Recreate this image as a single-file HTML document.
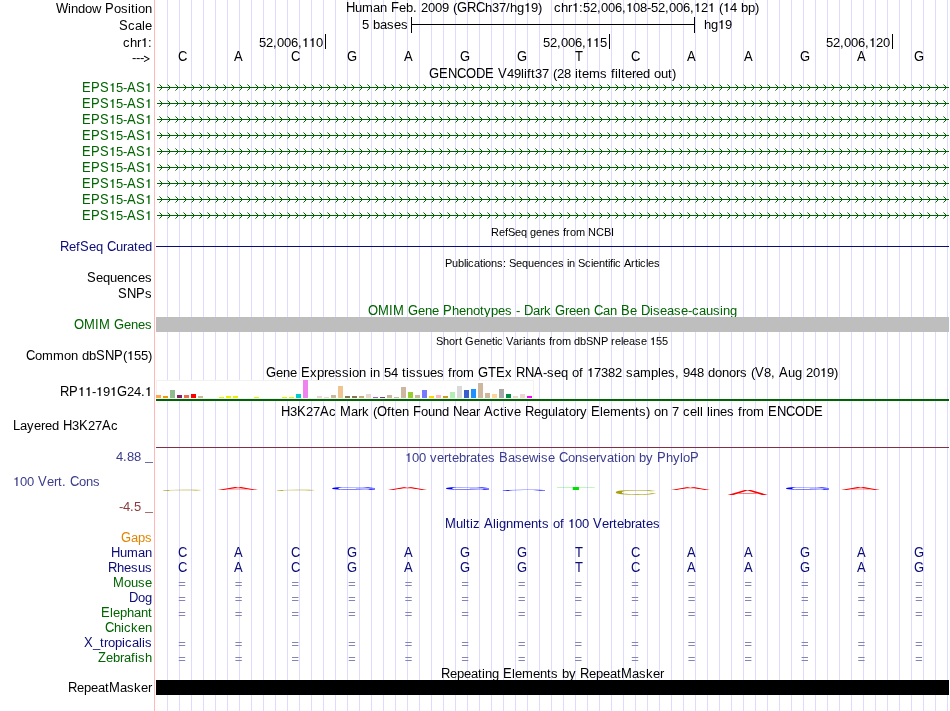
<!DOCTYPE html><html><head><meta charset="utf-8"><style>html,body{margin:0;padding:0;background:#fff;width:950px;height:711px;overflow:hidden}svg{display:block;will-change:transform}text{font-family:"Liberation Sans",sans-serif;font-size:13px}.s text{font-size:11px}</style></head><body>
<svg width="950" height="711" viewBox="0 0 950 711">
<rect width="950" height="711" fill="#fff"/>
<path d="M167 0h1v711h-1zM179 0h1v711h-1zM191 0h1v711h-1zM203 0h1v711h-1zM215 0h1v711h-1zM227 0h1v711h-1zM239 0h1v711h-1zM251 0h1v711h-1zM263 0h1v711h-1zM275 0h1v711h-1zM287 0h1v711h-1zM299 0h1v711h-1zM311 0h1v711h-1zM323 0h1v711h-1zM335 0h1v711h-1zM347 0h1v711h-1zM359 0h1v711h-1zM371 0h1v711h-1zM383 0h1v711h-1zM395 0h1v711h-1zM407 0h1v711h-1zM419 0h1v711h-1zM431 0h1v711h-1zM443 0h1v711h-1zM455 0h1v711h-1zM467 0h1v711h-1zM479 0h1v711h-1zM491 0h1v711h-1zM503 0h1v711h-1zM515 0h1v711h-1zM527 0h1v711h-1zM539 0h1v711h-1zM551 0h1v711h-1zM563 0h1v711h-1zM575 0h1v711h-1zM587 0h1v711h-1zM599 0h1v711h-1zM611 0h1v711h-1zM623 0h1v711h-1zM635 0h1v711h-1zM647 0h1v711h-1zM659 0h1v711h-1zM671 0h1v711h-1zM683 0h1v711h-1zM695 0h1v711h-1zM707 0h1v711h-1zM719 0h1v711h-1zM731 0h1v711h-1zM743 0h1v711h-1zM755 0h1v711h-1zM767 0h1v711h-1zM779 0h1v711h-1zM791 0h1v711h-1zM803 0h1v711h-1zM815 0h1v711h-1zM827 0h1v711h-1zM839 0h1v711h-1zM851 0h1v711h-1zM863 0h1v711h-1zM875 0h1v711h-1zM887 0h1v711h-1zM899 0h1v711h-1zM911 0h1v711h-1zM923 0h1v711h-1zM935 0h1v711h-1zM947 0h1v711h-1z" fill="#dcdcff" shape-rendering="crispEdges"/>
<rect x="154" y="0" width="1" height="711" fill="#ffb8b8" shape-rendering="crispEdges"/>
<g><text transform="translate(0 13) scale(1 1.118)" x="56 105" y="0">WP</text><text transform="translate(0 13) scale(1 1.05)" x="68 78 128 131 135" y="0">iditi</text><text transform="translate(0 13) scale(1 1.02)" x="71 85 92 114 121 138 145" y="0">nowoson</text></g>
<g><text transform="translate(0 30) scale(1 1.118)" x="119" y="0">S</text><text transform="translate(0 30) scale(1 1.02)" x="128 135 145" y="0">cae</text><text transform="translate(0 30) scale(1 1.05)" x="142" y="0">l</text></g>
<g><text transform="translate(0 47) scale(1 1.02)" x="123 137 148" y="0">cr:</text><text transform="translate(0 47) scale(1 1.05)" x="130" y="0">h</text><path transform="translate(141 47)" d="M3.25 0.00L4.55 0.00L4.55 -9.10L3.60 -9.10C3.40 -8.00 2.70 -7.45 1.35 -7.35L1.35 -6.45L3.25 -6.45Z"/></g>
<g><text transform="translate(0 62) scale(1 1.02)" x="132 136 140" y="0">---</text></g>
<path d="M144.4 56.3L149.2 58.85L144.4 61.4" fill="none" stroke="#000" stroke-width="1.05" stroke-linejoin="round" stroke-linecap="round"/>
<g><text transform="translate(0 12) scale(1 1.118)" x="346 391 457 467 476" y="0">HFGRC</text><text transform="translate(0 12) scale(1 1.02)" x="355 362 373 380 399 413 453 506 517 538" y="0">umane.(/g)</text><text transform="translate(0 12) scale(1 1.05)" x="406 485 510" y="0">bhh</text><text transform="translate(0 12)" x="421 428 435 442 492 499 531" y="0">2009379</text><path transform="translate(524 12)" d="M3.25 0.00L4.55 0.00L4.55 -9.10L3.60 -9.10C3.40 -8.00 2.70 -7.45 1.35 -7.35L1.35 -6.45L3.25 -6.45Z"/></g>
<g><text transform="translate(0 12) scale(1 1.02)" x="554 568 579 597 622 647 665 690 719 748 755" y="0">cr:,,-,,(p)</text><text transform="translate(0 12) scale(1 1.05)" x="561 741" y="0">hb</text><text transform="translate(0 12)" x="583 590 601 608 615 633 640 651 658 669 676 683 701 730" y="0">52006085200624</text><path transform="translate(572 12)" d="M3.25 0.00L4.55 0.00L4.55 -9.10L3.60 -9.10C3.40 -8.00 2.70 -7.45 1.35 -7.35L1.35 -6.45L3.25 -6.45Z"/><path transform="translate(626 12)" d="M3.25 0.00L4.55 0.00L4.55 -9.10L3.60 -9.10C3.40 -8.00 2.70 -7.45 1.35 -7.35L1.35 -6.45L3.25 -6.45Z"/><path transform="translate(694 12)" d="M3.25 0.00L4.55 0.00L4.55 -9.10L3.60 -9.10C3.40 -8.00 2.70 -7.45 1.35 -7.35L1.35 -6.45L3.25 -6.45Z"/><path transform="translate(708 12)" d="M3.25 0.00L4.55 0.00L4.55 -9.10L3.60 -9.10C3.40 -8.00 2.70 -7.45 1.35 -7.35L1.35 -6.45L3.25 -6.45Z"/><path transform="translate(723 12)" d="M3.25 0.00L4.55 0.00L4.55 -9.10L3.60 -9.10C3.40 -8.00 2.70 -7.45 1.35 -7.35L1.35 -6.45L3.25 -6.45Z"/></g>
<g><text transform="translate(0 29)" x="362" y="0">5</text><text transform="translate(0 29) scale(1 1.05)" x="373" y="0">b</text><text transform="translate(0 29) scale(1 1.02)" x="380 387 394 401" y="0">ases</text></g>
<g><text transform="translate(0 29) scale(1 1.05)" x="704" y="0">h</text><text transform="translate(0 29) scale(1 1.02)" x="711" y="0">g</text><text transform="translate(0 29)" x="725" y="0">9</text><path transform="translate(718 29)" d="M3.25 0.00L4.55 0.00L4.55 -9.10L3.60 -9.10C3.40 -8.00 2.70 -7.45 1.35 -7.35L1.35 -6.45L3.25 -6.45Z"/></g>
<g fill="#000" shape-rendering="crispEdges">
<rect x="411" y="17" width="1" height="16"/><rect x="694" y="17" width="1" height="16"/><rect x="411" y="24" width="284" height="1"/>
<rect x="325" y="34" width="1" height="15"/><rect x="609" y="34" width="1" height="15"/><rect x="892" y="34" width="1" height="15"/>
</g>
<g><text transform="translate(0 47)" x="259 266 277 284 291 316" y="0">520060</text><text transform="translate(0 47) scale(1 1.02)" x="273 298" y="0">,,</text><path transform="translate(302 47)" d="M3.25 0.00L4.55 0.00L4.55 -9.10L3.60 -9.10C3.40 -8.00 2.70 -7.45 1.35 -7.35L1.35 -6.45L3.25 -6.45Z"/><path transform="translate(309 47)" d="M3.25 0.00L4.55 0.00L4.55 -9.10L3.60 -9.10C3.40 -8.00 2.70 -7.45 1.35 -7.35L1.35 -6.45L3.25 -6.45Z"/></g>
<g><text transform="translate(0 47)" x="543 550 561 568 575 600" y="0">520065</text><text transform="translate(0 47) scale(1 1.02)" x="557 582" y="0">,,</text><path transform="translate(586 47)" d="M3.25 0.00L4.55 0.00L4.55 -9.10L3.60 -9.10C3.40 -8.00 2.70 -7.45 1.35 -7.35L1.35 -6.45L3.25 -6.45Z"/><path transform="translate(593 47)" d="M3.25 0.00L4.55 0.00L4.55 -9.10L3.60 -9.10C3.40 -8.00 2.70 -7.45 1.35 -7.35L1.35 -6.45L3.25 -6.45Z"/></g>
<g><text transform="translate(0 47)" x="826 833 844 851 858 876 883" y="0">5200620</text><text transform="translate(0 47) scale(1 1.02)" x="840 865" y="0">,,</text><path transform="translate(869 47)" d="M3.25 0.00L4.55 0.00L4.55 -9.10L3.60 -9.10C3.40 -8.00 2.70 -7.45 1.35 -7.35L1.35 -6.45L3.25 -6.45Z"/></g>
<g><text transform="translate(0 61) scale(1 1.118)" x="178" y="0">C</text></g>
<g><text transform="translate(0 61) scale(1 1.118)" x="234" y="0">A</text></g>
<g><text transform="translate(0 61) scale(1 1.118)" x="291" y="0">C</text></g>
<g><text transform="translate(0 61) scale(1 1.118)" x="347" y="0">G</text></g>
<g><text transform="translate(0 61) scale(1 1.118)" x="404" y="0">A</text></g>
<g><text transform="translate(0 61) scale(1 1.118)" x="460" y="0">G</text></g>
<g><text transform="translate(0 61) scale(1 1.118)" x="517" y="0">G</text></g>
<g><text transform="translate(0 61) scale(1 1.118)" x="575" y="0">T</text></g>
<g><text transform="translate(0 61) scale(1 1.118)" x="631" y="0">C</text></g>
<g><text transform="translate(0 61) scale(1 1.118)" x="687" y="0">A</text></g>
<g><text transform="translate(0 61) scale(1 1.118)" x="744" y="0">A</text></g>
<g><text transform="translate(0 61) scale(1 1.118)" x="800" y="0">G</text></g>
<g><text transform="translate(0 61) scale(1 1.118)" x="857" y="0">A</text></g>
<g><text transform="translate(0 61) scale(1 1.118)" x="914" y="0">G</text></g>
<g><text transform="translate(0 78) scale(1 1.118)" x="429 439 448 457 466 476 485 498" y="0">GENCODEV</text><text transform="translate(0 78)" x="507 514 535 542 557 564" y="0">493728</text><text transform="translate(0 78) scale(1 1.05)" x="521 524 527 531 575 578 611 615 618 621 643 668" y="0">liftitfiltdt</text><text transform="translate(0 78) scale(1 1.02)" x="553 582 589 600 625 632 636 654 661 672" y="0">(emsereou)</text></g>
<g fill="#006400"><text transform="translate(0 92) scale(1 1.118)" x="82 91 100 127 136" y="0">EPSAS</text><text transform="translate(0 92)" x="116" y="0">5</text><text transform="translate(0 92) scale(1 1.02)" x="123" y="0">-</text><path transform="translate(109 92)" d="M3.25 0.00L4.55 0.00L4.55 -9.10L3.60 -9.10C3.40 -8.00 2.70 -7.45 1.35 -7.35L1.35 -6.45L3.25 -6.45Z"/><path transform="translate(145 92)" d="M3.25 0.00L4.55 0.00L4.55 -9.10L3.60 -9.10C3.40 -8.00 2.70 -7.45 1.35 -7.35L1.35 -6.45L3.25 -6.45Z"/></g>
<g fill="#006400"><text transform="translate(0 108) scale(1 1.118)" x="82 91 100 127 136" y="0">EPSAS</text><text transform="translate(0 108)" x="116" y="0">5</text><text transform="translate(0 108) scale(1 1.02)" x="123" y="0">-</text><path transform="translate(109 108)" d="M3.25 0.00L4.55 0.00L4.55 -9.10L3.60 -9.10C3.40 -8.00 2.70 -7.45 1.35 -7.35L1.35 -6.45L3.25 -6.45Z"/><path transform="translate(145 108)" d="M3.25 0.00L4.55 0.00L4.55 -9.10L3.60 -9.10C3.40 -8.00 2.70 -7.45 1.35 -7.35L1.35 -6.45L3.25 -6.45Z"/></g>
<g fill="#006400"><text transform="translate(0 124) scale(1 1.118)" x="82 91 100 127 136" y="0">EPSAS</text><text transform="translate(0 124)" x="116" y="0">5</text><text transform="translate(0 124) scale(1 1.02)" x="123" y="0">-</text><path transform="translate(109 124)" d="M3.25 0.00L4.55 0.00L4.55 -9.10L3.60 -9.10C3.40 -8.00 2.70 -7.45 1.35 -7.35L1.35 -6.45L3.25 -6.45Z"/><path transform="translate(145 124)" d="M3.25 0.00L4.55 0.00L4.55 -9.10L3.60 -9.10C3.40 -8.00 2.70 -7.45 1.35 -7.35L1.35 -6.45L3.25 -6.45Z"/></g>
<g fill="#006400"><text transform="translate(0 140) scale(1 1.118)" x="82 91 100 127 136" y="0">EPSAS</text><text transform="translate(0 140)" x="116" y="0">5</text><text transform="translate(0 140) scale(1 1.02)" x="123" y="0">-</text><path transform="translate(109 140)" d="M3.25 0.00L4.55 0.00L4.55 -9.10L3.60 -9.10C3.40 -8.00 2.70 -7.45 1.35 -7.35L1.35 -6.45L3.25 -6.45Z"/><path transform="translate(145 140)" d="M3.25 0.00L4.55 0.00L4.55 -9.10L3.60 -9.10C3.40 -8.00 2.70 -7.45 1.35 -7.35L1.35 -6.45L3.25 -6.45Z"/></g>
<g fill="#006400"><text transform="translate(0 156) scale(1 1.118)" x="82 91 100 127 136" y="0">EPSAS</text><text transform="translate(0 156)" x="116" y="0">5</text><text transform="translate(0 156) scale(1 1.02)" x="123" y="0">-</text><path transform="translate(109 156)" d="M3.25 0.00L4.55 0.00L4.55 -9.10L3.60 -9.10C3.40 -8.00 2.70 -7.45 1.35 -7.35L1.35 -6.45L3.25 -6.45Z"/><path transform="translate(145 156)" d="M3.25 0.00L4.55 0.00L4.55 -9.10L3.60 -9.10C3.40 -8.00 2.70 -7.45 1.35 -7.35L1.35 -6.45L3.25 -6.45Z"/></g>
<g fill="#006400"><text transform="translate(0 172) scale(1 1.118)" x="82 91 100 127 136" y="0">EPSAS</text><text transform="translate(0 172)" x="116" y="0">5</text><text transform="translate(0 172) scale(1 1.02)" x="123" y="0">-</text><path transform="translate(109 172)" d="M3.25 0.00L4.55 0.00L4.55 -9.10L3.60 -9.10C3.40 -8.00 2.70 -7.45 1.35 -7.35L1.35 -6.45L3.25 -6.45Z"/><path transform="translate(145 172)" d="M3.25 0.00L4.55 0.00L4.55 -9.10L3.60 -9.10C3.40 -8.00 2.70 -7.45 1.35 -7.35L1.35 -6.45L3.25 -6.45Z"/></g>
<g fill="#006400"><text transform="translate(0 188) scale(1 1.118)" x="82 91 100 127 136" y="0">EPSAS</text><text transform="translate(0 188)" x="116" y="0">5</text><text transform="translate(0 188) scale(1 1.02)" x="123" y="0">-</text><path transform="translate(109 188)" d="M3.25 0.00L4.55 0.00L4.55 -9.10L3.60 -9.10C3.40 -8.00 2.70 -7.45 1.35 -7.35L1.35 -6.45L3.25 -6.45Z"/><path transform="translate(145 188)" d="M3.25 0.00L4.55 0.00L4.55 -9.10L3.60 -9.10C3.40 -8.00 2.70 -7.45 1.35 -7.35L1.35 -6.45L3.25 -6.45Z"/></g>
<g fill="#006400"><text transform="translate(0 204) scale(1 1.118)" x="82 91 100 127 136" y="0">EPSAS</text><text transform="translate(0 204)" x="116" y="0">5</text><text transform="translate(0 204) scale(1 1.02)" x="123" y="0">-</text><path transform="translate(109 204)" d="M3.25 0.00L4.55 0.00L4.55 -9.10L3.60 -9.10C3.40 -8.00 2.70 -7.45 1.35 -7.35L1.35 -6.45L3.25 -6.45Z"/><path transform="translate(145 204)" d="M3.25 0.00L4.55 0.00L4.55 -9.10L3.60 -9.10C3.40 -8.00 2.70 -7.45 1.35 -7.35L1.35 -6.45L3.25 -6.45Z"/></g>
<g fill="#006400"><text transform="translate(0 220) scale(1 1.118)" x="82 91 100 127 136" y="0">EPSAS</text><text transform="translate(0 220)" x="116" y="0">5</text><text transform="translate(0 220) scale(1 1.02)" x="123" y="0">-</text><path transform="translate(109 220)" d="M3.25 0.00L4.55 0.00L4.55 -9.10L3.60 -9.10C3.40 -8.00 2.70 -7.45 1.35 -7.35L1.35 -6.45L3.25 -6.45Z"/><path transform="translate(145 220)" d="M3.25 0.00L4.55 0.00L4.55 -9.10L3.60 -9.10C3.40 -8.00 2.70 -7.45 1.35 -7.35L1.35 -6.45L3.25 -6.45Z"/></g>
<defs><pattern id="chev" patternUnits="userSpaceOnUse" x="159" y="84" width="8" height="16"><g shape-rendering="crispEdges"><rect x="0" y="3" width="8" height="1" fill="#006400"/><rect x="2" y="2" width="1" height="3" fill="#006400"/><rect x="1" y="1" width="1" height="1" fill="#006400"/><rect x="1" y="5" width="1" height="1" fill="#006400"/><rect x="0" y="0" width="1" height="1" fill="#6aa86a"/><rect x="0" y="6" width="1" height="1" fill="#6aa86a"/></g></pattern></defs>
<rect x="157" y="84" width="792" height="144" fill="url(#chev)"/>
<g class="s"><text transform="translate(0 236) scale(1 1.03)" x="491 499 505 508 515 521 530 536 542 548 554 563 566 570 576 588 596 604 611" y="0">RefSeqgenesfromNCBI</text></g>
<g fill="#0c0c78"><text transform="translate(0 251) scale(1 1.118)" x="60 80 107" y="0">RSC</text><text transform="translate(0 251) scale(1 1.02)" x="69 89 96 116 123 127 138" y="0">eequrae</text><text transform="translate(0 251) scale(1 1.05)" x="76 134 145" y="0">ftd</text></g>
<rect x="156" y="246" width="793" height="1" fill="#0c0c78" shape-rendering="crispEdges"/>
<g class="s"><text transform="translate(0 267) scale(1 1.03)" x="445 452 458 464 466 468 474 480 483 485 491 497 503 509 516 522 528 534 540 546 552 558 567 569 578 585 591 593 599 605 608 610 613 615 624 631 635 638 640 646 648 654" y="0">Publications:SequencesinScientificArticles</text></g>
<g><text transform="translate(0 282) scale(1 1.118)" x="87" y="0">S</text><text transform="translate(0 282) scale(1 1.02)" x="96 103 110 117 124 131 138 145" y="0">equences</text></g>
<g><text transform="translate(0 298) scale(1 1.118)" x="118 127 136" y="0">SNP</text><text transform="translate(0 298) scale(1 1.02)" x="145" y="0">s</text></g>
<g fill="#006400"><text transform="translate(0 315) scale(1 1.118)" x="368 378 389 393 408 443 524 555 594 621 641" y="0">OMIMGPDGCBD</text><text transform="translate(0 315) scale(1 1.02)" x="418 425 432 459 466 473 484 491 498 505 516 533 540 565 569 576 583 603 610 630 653 660 667 674 681 688 692 699 706 713 723 730" y="0">eneenoypes-arreenanesease-causng</text><text transform="translate(0 315) scale(1 1.05)" x="452 480 544 650 720" y="0">htkii</text></g>
<g fill="#006400"><text transform="translate(0 329) scale(1 1.118)" x="74 84 95 99 114" y="0">OMIMG</text><text transform="translate(0 329) scale(1 1.02)" x="124 131 138 145" y="0">enes</text></g>
<rect x="156" y="317" width="793" height="15" fill="#bebebe" shape-rendering="crispEdges"/>
<g class="s"><text transform="translate(0 345) scale(1 1.03)" x="436 443 449 455 459 465 474 480 486 492 495 497 506 513 519 523 525 531 537 540 549 552 556 562 574 580 586 593 601 611 615 621 623 629 635 641" y="0">ShortGeneticVariantsfromdbSNPrelease</text><text transform="translate(0 345) scale(1 1.03)" x="656 662" y="0">55</text><path transform="translate(650 345)" d="M2.75 0.00L3.85 0.00L3.85 -7.70L3.05 -7.70C2.88 -6.77 2.28 -6.30 1.14 -6.22L1.14 -5.46L2.75 -5.46Z"/></g>
<g><text transform="translate(0 360) scale(1 1.118)" x="26 96 105 114" y="0">CSNP</text><text transform="translate(0 360) scale(1 1.02)" x="35 42 53 64 71 123 148" y="0">ommon()</text><text transform="translate(0 360) scale(1 1.05)" x="82 89" y="0">db</text><text transform="translate(0 360)" x="134 141" y="0">55</text><path transform="translate(127 360)" d="M3.25 0.00L4.55 0.00L4.55 -9.10L3.60 -9.10C3.40 -8.00 2.70 -7.45 1.35 -7.35L1.35 -6.45L3.25 -6.45Z"/></g>
<g><text transform="translate(0 377) scale(1 1.118)" x="266 301 478 488 496 516 525 534 755 779" y="0">GEGTERNAVA</text><text transform="translate(0 377) scale(1 1.02)" x="276 283 290 310 317 324 328 335 342 352 359 373 409 416 423 430 437 452 456 463 505 543 547 554 561 572 626 633 640 651 661 668 675 715 722 729 736 740 751 771 788 795 834" y="0">enexpressonnssuesromx-seqosampes,onors(,ug)</text><text transform="translate(0 377) scale(1 1.05)" x="349 370 402 406 448 579 658 708" y="0">iitiffld</text><text transform="translate(0 377)" x="384 391 594 601 608 615 683 690 697 764 806 813 827" y="0">5473829488209</text><path transform="translate(587 377)" d="M3.25 0.00L4.55 0.00L4.55 -9.10L3.60 -9.10C3.40 -8.00 2.70 -7.45 1.35 -7.35L1.35 -6.45L3.25 -6.45Z"/><path transform="translate(820 377)" d="M3.25 0.00L4.55 0.00L4.55 -9.10L3.60 -9.10C3.40 -8.00 2.70 -7.45 1.35 -7.35L1.35 -6.45L3.25 -6.45Z"/></g>
<g><text transform="translate(0 396) scale(1 1.118)" x="60 69 117" y="0">RPG</text><text transform="translate(0 396) scale(1 1.02)" x="92 141" y="0">-.</text><text transform="translate(0 396)" x="103 127 134" y="0">924</text><path transform="translate(78 396)" d="M3.25 0.00L4.55 0.00L4.55 -9.10L3.60 -9.10C3.40 -8.00 2.70 -7.45 1.35 -7.35L1.35 -6.45L3.25 -6.45Z"/><path transform="translate(85 396)" d="M3.25 0.00L4.55 0.00L4.55 -9.10L3.60 -9.10C3.40 -8.00 2.70 -7.45 1.35 -7.35L1.35 -6.45L3.25 -6.45Z"/><path transform="translate(96 396)" d="M3.25 0.00L4.55 0.00L4.55 -9.10L3.60 -9.10C3.40 -8.00 2.70 -7.45 1.35 -7.35L1.35 -6.45L3.25 -6.45Z"/><path transform="translate(110 396)" d="M3.25 0.00L4.55 0.00L4.55 -9.10L3.60 -9.10C3.40 -8.00 2.70 -7.45 1.35 -7.35L1.35 -6.45L3.25 -6.45Z"/><path transform="translate(145 396)" d="M3.25 0.00L4.55 0.00L4.55 -9.10L3.60 -9.10C3.40 -8.00 2.70 -7.45 1.35 -7.35L1.35 -6.45L3.25 -6.45Z"/></g>
<rect x="156.5" y="380.5" width="377" height="18" fill="#fff" stroke="#f2f2f2" stroke-width="1"/>
<g shape-rendering="crispEdges">
<rect x="156" y="395" width="5" height="3" fill="#FFA54F"/>
<rect x="163" y="396" width="5" height="2" fill="#EE9A00"/>
<rect x="170" y="390" width="5" height="8" fill="#8FBC8F"/>
<rect x="177" y="395" width="5" height="3" fill="#8B1C62"/>
<rect x="184" y="395" width="5" height="3" fill="#EE6A50"/>
<rect x="191" y="394" width="5" height="4" fill="#FF0000"/>
<rect x="198" y="396" width="5" height="2" fill="#CDB79E"/>
<rect x="219" y="397" width="5" height="1" fill="#EEEE00"/>
<rect x="226" y="396" width="5" height="2" fill="#EEEE00"/>
<rect x="233" y="396" width="5" height="2" fill="#EEEE00"/>
<rect x="254" y="397" width="5" height="1" fill="#EEEE00"/>
<rect x="282" y="397" width="5" height="1" fill="#EEEE00"/>
<rect x="289" y="397" width="5" height="1" fill="#EEEE00"/>
<rect x="296" y="394" width="5" height="4" fill="#00CDCD"/>
<rect x="303" y="380" width="5" height="18" fill="#EE82EE"/>
<rect x="317" y="396" width="5" height="2" fill="#EED5D2"/>
<rect x="324" y="397" width="5" height="1" fill="#EED5D2"/>
<rect x="331" y="395" width="5" height="3" fill="#CDB79E"/>
<rect x="338" y="386" width="5" height="12" fill="#EEC591"/>
<rect x="345" y="396" width="5" height="2" fill="#8B7355"/>
<rect x="352" y="396" width="5" height="2" fill="#8B7355"/>
<rect x="359" y="396" width="5" height="2" fill="#CDAA7D"/>
<rect x="366" y="394" width="5" height="4" fill="#EED5D2"/>
<rect x="373" y="397" width="5" height="1" fill="#B452CD"/>
<rect x="380" y="397" width="5" height="1" fill="#7A378B"/>
<rect x="387" y="395" width="5" height="3" fill="#CDB79E"/>
<rect x="394" y="397" width="5" height="1" fill="#CDB79E"/>
<rect x="401" y="387" width="5" height="11" fill="#CDB79E"/>
<rect x="408" y="392" width="5" height="6" fill="#9ACD32"/>
<rect x="415" y="395" width="5" height="3" fill="#CDB79E"/>
<rect x="422" y="390" width="5" height="8" fill="#7777FF"/>
<rect x="429" y="396" width="5" height="2" fill="#FFD700"/>
<rect x="436" y="395" width="5" height="3" fill="#FFB6C1"/>
<rect x="443" y="396" width="5" height="2" fill="#CD9B1D"/>
<rect x="450" y="392" width="5" height="6" fill="#B4EEB4"/>
<rect x="457" y="386" width="5" height="12" fill="#D9D9D9"/>
<rect x="464" y="390" width="5" height="8" fill="#3A5FCD"/>
<rect x="471" y="389" width="5" height="9" fill="#1E90FF"/>
<rect x="478" y="383" width="5" height="15" fill="#CDB79E"/>
<rect x="485" y="393" width="5" height="5" fill="#CDB79E"/>
<rect x="492" y="394" width="5" height="4" fill="#FFD39B"/>
<rect x="499" y="389" width="5" height="9" fill="#A6A6A6"/>
<rect x="506" y="394" width="5" height="4" fill="#008B45"/>
<rect x="513" y="396" width="5" height="2" fill="#EED5D2"/>
<rect x="520" y="394" width="5" height="4" fill="#EED5D2"/>
<rect x="527" y="396" width="5" height="2" fill="#FF00FF"/>
</g>
<rect x="156" y="399" width="793" height="2" fill="#006400" shape-rendering="crispEdges"/>
<g><text transform="translate(0 416) scale(1 1.118)" x="281 297 320 340 377 413 453 484 525 591 768 777 786 795 805 814" y="0">HKAMOFNAREENCODE</text><text transform="translate(0 416)" x="290 306 313 672" y="0">3277</text><text transform="translate(0 416) scale(1 1.02)" x="329 351 358 373 395 402 421 428 435 462 469 476 493 507 514 534 541 548 558 569 576 580 603 610 621 628 639 646 654 661 683 690 713 720 727 742 746 753" y="0">car(enounearcveeguaoryemens)oncenesrom</text><text transform="translate(0 416) scale(1 1.05)" x="362 387 391 442 500 504 555 565 600 635 697 700 707 710 738" y="0">kftdtiltltlllif</text></g>
<g><text transform="translate(0 430) scale(1 1.118)" x="13 63 79 102" y="0">LHKA</text><text transform="translate(0 430) scale(1 1.02)" x="20 27 34 41 45 111" y="0">ayerec</text><text transform="translate(0 430) scale(1 1.05)" x="52" y="0">d</text><text transform="translate(0 430)" x="72 88 95" y="0">327</text></g>
<rect x="156" y="447" width="793" height="1" fill="#803040" shape-rendering="crispEdges"/>
<g fill="#3c3c8c"><text transform="translate(0 462)" x="412 419" y="0">00</text><text transform="translate(0 462) scale(1 1.02)" x="430 437 444 452 466 470 481 488 508 515 522 529 541 548 568 575 582 589 596 600 607 621 628 646 673 683" y="0">vereraesasewseonservaonyyo</text><text transform="translate(0 462) scale(1 1.05)" x="448 459 477 538 614 618 639 666 680" y="0">tbtitibhl</text><text transform="translate(0 462) scale(1 1.118)" x="499 559 657 690" y="0">BCPP</text><path transform="translate(405 462)" d="M3.25 0.00L4.55 0.00L4.55 -9.10L3.60 -9.10C3.40 -8.00 2.70 -7.45 1.35 -7.35L1.35 -6.45L3.25 -6.45Z"/></g>
<g fill="#3c3c8c"><text transform="translate(0 461)" x="116 127 134" y="0">488</text><text transform="translate(0 461) scale(1 1.02)" x="123" y="0">.</text></g>
<rect x="145" y="462" width="8" height="1" fill="#3c3c8c" fill-opacity="0.75" shape-rendering="crispEdges"/>
<g fill="#3c3c8c"><text transform="translate(0 486)" x="20 27" y="0">00</text><text transform="translate(0 486) scale(1 1.118)" x="38 70" y="0">VC</text><text transform="translate(0 486) scale(1 1.02)" x="47 54 62 79 86 93" y="0">er.ons</text><text transform="translate(0 486) scale(1 1.05)" x="58" y="0">t</text><path transform="translate(13 486)" d="M3.25 0.00L4.55 0.00L4.55 -9.10L3.60 -9.10C3.40 -8.00 2.70 -7.45 1.35 -7.35L1.35 -6.45L3.25 -6.45Z"/></g>
<g fill="#8c3c3c"><text transform="translate(0 511) scale(1 1.02)" x="119 130" y="0">-.</text><text transform="translate(0 511)" x="123 134" y="0">45</text></g>
<rect x="145" y="512" width="8" height="1" fill="#8c3c3c" fill-opacity="0.75" shape-rendering="crispEdges"/>
<path d="M183.34 489.93Q176.29 489.93 172.37 490.05Q168.45 490.18 168.45 490.4Q168.45 490.61 172.53 490.74Q176.62 490.87 183.58 490.87Q192.51 490.87 197 490.63L201.7 490.69Q199.08 490.84 194.33 490.92Q189.58 491 183.31 491Q176.89 491 172.2 490.93Q167.51 490.85 165.06 490.72Q162.6 490.58 162.6 490.4Q162.6 490.12 168.09 489.96Q173.57 489.8 183.28 489.8Q190.06 489.8 194.62 489.87Q199.17 489.95 201.31 490.09L195.85 490.14Q194.37 490.04 191.1 489.98Q187.83 489.93 183.34 489.93Z" fill="#a8a010"/>
<path d="M252.21 490 247.44 489.15H228.38L223.58 490H217.7L234.76 487.1H241.2L258 490ZM237.91 487.4 237.64 487.45Q236.9 487.62 235.45 487.89L230.1 488.85H245.74L240.37 487.89Q239.54 487.75 238.71 487.57Z" fill="#ff0000"/>
<path d="M297.18 489.93Q290.21 489.93 286.34 490.05Q282.47 490.18 282.47 490.4Q282.47 490.61 286.51 490.74Q290.54 490.87 297.41 490.87Q306.22 490.87 310.66 490.63L315.3 490.69Q312.71 490.84 308.02 490.92Q303.34 491 297.15 491Q290.81 491 286.18 490.93Q281.55 490.85 279.13 490.72Q276.7 490.58 276.7 490.4Q276.7 490.12 282.12 489.96Q287.53 489.8 297.12 489.8Q303.81 489.8 308.31 489.87Q312.8 489.95 314.91 490.09L309.53 490.14Q308.07 490.04 304.84 489.98Q301.61 489.93 297.18 489.93Z" fill="#a8a010"/>
<path d="M332.1 488.39Q332.1 487.68 338 487.29Q343.91 486.9 354.59 486.9Q362.1 486.9 366.79 487.06Q371.47 487.23 374.01 487.59L368.17 487.7Q366.24 487.45 362.86 487.34Q359.47 487.22 354.43 487.22Q346.6 487.22 342.46 487.53Q338.32 487.83 338.32 488.39Q338.32 488.94 342.72 489.26Q347.12 489.58 354.88 489.58Q359.31 489.58 363.14 489.49Q366.98 489.41 369.35 489.26V488.73H355.84V488.4H375V489.41Q371.41 489.64 366.19 489.77Q360.98 489.9 354.88 489.9Q347.79 489.9 342.66 489.72Q337.52 489.54 334.81 489.19Q332.1 488.85 332.1 488.39Z" fill="#0000ff"/>
<path d="M421.37 490 416.72 489.12H398.19L393.52 490H387.8L404.4 487H410.66L427 490ZM407.46 487.31 407.2 487.37Q406.48 487.54 405.06 487.82L399.87 488.81H415.08L409.85 487.82Q409.05 487.67 408.24 487.48Z" fill="#ff0000"/>
<path d="M446 488.39Q446 487.68 451.92 487.29Q457.84 486.9 468.55 486.9Q476.07 486.9 480.77 487.06Q485.46 487.23 488 487.59L482.15 487.7Q480.22 487.45 476.83 487.34Q473.43 487.22 468.38 487.22Q460.54 487.22 456.39 487.53Q452.24 487.83 452.24 488.39Q452.24 488.94 456.65 489.26Q461.05 489.58 468.83 489.58Q473.27 489.58 477.12 489.49Q480.96 489.41 483.34 489.26V488.73H469.8V488.4H489V489.41Q485.4 489.64 480.17 489.77Q474.95 489.9 468.83 489.9Q461.73 489.9 456.58 489.72Q451.44 489.54 448.72 489.19Q446 488.85 446 488.39Z" fill="#0000ff"/>
<path d="M502.4 490.44Q502.4 490.14 508.26 489.97Q514.13 489.8 524.74 489.8Q532.19 489.8 536.84 489.87Q541.5 489.94 544.01 490.1L538.21 490.15Q536.3 490.04 532.94 489.99Q529.58 489.94 524.58 489.94Q516.8 489.94 512.69 490.07Q508.58 490.2 508.58 490.44Q508.58 490.68 512.95 490.82Q517.31 490.96 525.02 490.96Q529.42 490.96 533.23 490.92Q537.03 490.89 539.39 490.82V490.59H525.98V490.45H545V490.89Q541.43 490.99 536.25 491.04Q531.08 491.1 525.02 491.1Q517.98 491.1 512.88 491.02Q507.78 490.94 505.09 490.79Q502.4 490.65 502.4 490.44Z" fill="#0000ff"/>
<path d="M578.94 487.23V489.9H572.76V487.23H557V486.9H594.7V487.23Z" fill="#00e000"/>
<path d="M637.34 490.44Q629.98 490.44 625.89 490.96Q621.8 491.48 621.8 492.38Q621.8 493.27 626.07 493.82Q630.33 494.36 637.59 494.36Q646.91 494.36 651.59 493.35L656.5 493.62Q653.76 494.24 648.81 494.57Q643.85 494.9 637.31 494.9Q630.61 494.9 625.72 494.59Q620.83 494.29 618.26 493.72Q615.7 493.16 615.7 492.38Q615.7 491.22 621.43 490.56Q627.15 489.9 637.28 489.9Q644.36 489.9 649.11 490.2Q653.86 490.51 656.09 491.1L650.4 491.31Q648.86 490.89 645.44 490.66Q642.03 490.44 637.34 490.44Z" fill="#a8a010"/>
<path d="M704.4 490 699.78 489.12H681.34L676.69 490H671L687.51 487H693.75L710 490ZM690.56 487.31 690.3 487.37Q689.58 487.54 688.17 487.82L683 488.81H698.14L692.94 487.82Q692.14 487.67 691.33 487.48Z" fill="#ff0000"/>
<path d="M762.01 494.9 757.24 493.44H738.18L733.38 494.9H727.5L744.56 489.9H751L767.8 494.9ZM747.71 490.41 747.44 490.51Q746.7 490.8 745.25 491.27L739.9 492.91H755.54L750.17 491.26Q749.34 491.01 748.51 490.71Z" fill="#ff0000"/>
<path d="M786 488.39Q786 487.68 791.92 487.29Q797.84 486.9 808.55 486.9Q816.07 486.9 820.77 487.06Q825.46 487.23 828 487.59L822.15 487.7Q820.22 487.45 816.83 487.34Q813.43 487.22 808.38 487.22Q800.54 487.22 796.39 487.53Q792.24 487.83 792.24 488.39Q792.24 488.94 796.65 489.26Q801.05 489.58 808.83 489.58Q813.27 489.58 817.12 489.49Q820.96 489.41 823.34 489.26V488.73H809.8V488.4H829V489.41Q825.4 489.64 820.17 489.77Q814.95 489.9 808.83 489.9Q801.73 489.9 796.58 489.72Q791.44 489.54 788.72 489.19Q786 488.85 786 488.39Z" fill="#0000ff"/>
<path d="M874.4 490 869.78 489.15H851.34L846.69 490H841L857.51 487.1H863.75L880 490ZM860.56 487.4 860.3 487.45Q859.58 487.62 858.17 487.89L853 488.85H868.14L862.94 487.89Q862.14 487.75 861.33 487.57Z" fill="#ff0000"/>
<g fill="#0c0c78"><text transform="translate(0 528) scale(1 1.118)" x="445 484 593" y="0">MAV</text><text transform="translate(0 528) scale(1 1.02)" x="456 473 499 506 513 524 531 542 553 602 609 617 631 635 646 653" y="0">uzgnmensoereraes</text><text transform="translate(0 528) scale(1 1.05)" x="463 466 470 493 496 538 560 613 624 642" y="0">ltilitftbt</text><text transform="translate(0 528)" x="575 582" y="0">00</text><path transform="translate(568 528)" d="M3.25 0.00L4.55 0.00L4.55 -9.10L3.60 -9.10C3.40 -8.00 2.70 -7.45 1.35 -7.35L1.35 -6.45L3.25 -6.45Z"/></g>
<g fill="#e48400"><text transform="translate(0 542) scale(1 1.118)" x="121" y="0">G</text><text transform="translate(0 542) scale(1 1.02)" x="131 138 145" y="0">aps</text></g>
<g fill="#0c0c78"><text transform="translate(0 557) scale(1 1.118)" x="111" y="0">H</text><text transform="translate(0 557) scale(1 1.02)" x="120 127 138 145" y="0">uman</text></g>
<g fill="#0c0c78"><text transform="translate(0 572) scale(1 1.118)" x="108" y="0">R</text><text transform="translate(0 572) scale(1 1.05)" x="117" y="0">h</text><text transform="translate(0 572) scale(1 1.02)" x="124 131 138 145" y="0">esus</text></g>
<g fill="#006400"><text transform="translate(0 587) scale(1 1.118)" x="113" y="0">M</text><text transform="translate(0 587) scale(1 1.02)" x="124 131 138 145" y="0">ouse</text></g>
<g fill="#0c0c78"><text transform="translate(0 602) scale(1 1.118)" x="129" y="0">D</text><text transform="translate(0 602) scale(1 1.02)" x="138 145" y="0">og</text></g>
<g fill="#006400"><text transform="translate(0 617) scale(1 1.118)" x="101" y="0">E</text><text transform="translate(0 617) scale(1 1.05)" x="110 127 148" y="0">lht</text><text transform="translate(0 617) scale(1 1.02)" x="113 120 134 141" y="0">epan</text></g>
<g fill="#006400"><text transform="translate(0 632) scale(1 1.118)" x="105" y="0">C</text><text transform="translate(0 632) scale(1 1.05)" x="114 121 131" y="0">hik</text><text transform="translate(0 632) scale(1 1.02)" x="124 138 145" y="0">cen</text></g>
<g fill="#0c0c78"><text transform="translate(0 647) scale(1 1.118)" x="84" y="0">X</text><text transform="translate(0 647) scale(1 1.02)" x="93 104 108 115 125 132 145" y="0">_ropcas</text><text transform="translate(0 647) scale(1 1.05)" x="100 122 139 142" y="0">tili</text></g>
<g fill="#006400"><text transform="translate(0 662) scale(1 1.118)" x="98" y="0">Z</text><text transform="translate(0 662) scale(1 1.02)" x="106 120 124 138" y="0">eras</text><text transform="translate(0 662) scale(1 1.05)" x="113 131 135 145" y="0">bfih</text></g>
<g fill="#0c0c78"><text transform="translate(0 557) scale(1 1.118)" x="178" y="0">C</text></g>
<g fill="#0c0c78"><text transform="translate(0 572) scale(1 1.118)" x="178" y="0">C</text></g>
<g fill="#0c0c78"><text transform="translate(0 557) scale(1 1.118)" x="234" y="0">A</text></g>
<g fill="#0c0c78"><text transform="translate(0 572) scale(1 1.118)" x="234" y="0">A</text></g>
<g fill="#0c0c78"><text transform="translate(0 557) scale(1 1.118)" x="291" y="0">C</text></g>
<g fill="#0c0c78"><text transform="translate(0 572) scale(1 1.118)" x="291" y="0">C</text></g>
<g fill="#0c0c78"><text transform="translate(0 557) scale(1 1.118)" x="347" y="0">G</text></g>
<g fill="#0c0c78"><text transform="translate(0 572) scale(1 1.118)" x="347" y="0">G</text></g>
<g fill="#0c0c78"><text transform="translate(0 557) scale(1 1.118)" x="404" y="0">A</text></g>
<g fill="#0c0c78"><text transform="translate(0 572) scale(1 1.118)" x="404" y="0">A</text></g>
<g fill="#0c0c78"><text transform="translate(0 557) scale(1 1.118)" x="460" y="0">G</text></g>
<g fill="#0c0c78"><text transform="translate(0 572) scale(1 1.118)" x="460" y="0">G</text></g>
<g fill="#0c0c78"><text transform="translate(0 557) scale(1 1.118)" x="517" y="0">G</text></g>
<g fill="#0c0c78"><text transform="translate(0 572) scale(1 1.118)" x="517" y="0">G</text></g>
<g fill="#0c0c78"><text transform="translate(0 557) scale(1 1.118)" x="575" y="0">T</text></g>
<g fill="#0c0c78"><text transform="translate(0 572) scale(1 1.118)" x="575" y="0">T</text></g>
<g fill="#0c0c78"><text transform="translate(0 557) scale(1 1.118)" x="631" y="0">C</text></g>
<g fill="#0c0c78"><text transform="translate(0 572) scale(1 1.118)" x="631" y="0">C</text></g>
<g fill="#0c0c78"><text transform="translate(0 557) scale(1 1.118)" x="687" y="0">A</text></g>
<g fill="#0c0c78"><text transform="translate(0 572) scale(1 1.118)" x="687" y="0">A</text></g>
<g fill="#0c0c78"><text transform="translate(0 557) scale(1 1.118)" x="744" y="0">A</text></g>
<g fill="#0c0c78"><text transform="translate(0 572) scale(1 1.118)" x="744" y="0">A</text></g>
<g fill="#0c0c78"><text transform="translate(0 557) scale(1 1.118)" x="800" y="0">G</text></g>
<g fill="#0c0c78"><text transform="translate(0 572) scale(1 1.118)" x="800" y="0">G</text></g>
<g fill="#0c0c78"><text transform="translate(0 557) scale(1 1.118)" x="857" y="0">A</text></g>
<g fill="#0c0c78"><text transform="translate(0 572) scale(1 1.118)" x="857" y="0">A</text></g>
<g fill="#0c0c78"><text transform="translate(0 557) scale(1 1.118)" x="914" y="0">G</text></g>
<g fill="#0c0c78"><text transform="translate(0 572) scale(1 1.118)" x="914" y="0">G</text></g>
<path d="M178.8 582h6.4v1h-6.4zM178.8 585h6.4v1h-6.4zM178.8 597h6.4v1h-6.4zM178.8 600h6.4v1h-6.4zM178.8 612h6.4v1h-6.4zM178.8 615h6.4v1h-6.4zM178.8 642h6.4v1h-6.4zM178.8 645h6.4v1h-6.4zM178.8 657h6.4v1h-6.4zM178.8 660h6.4v1h-6.4zM235.4 582h6.4v1h-6.4zM235.4 585h6.4v1h-6.4zM235.4 597h6.4v1h-6.4zM235.4 600h6.4v1h-6.4zM235.4 612h6.4v1h-6.4zM235.4 615h6.4v1h-6.4zM235.4 642h6.4v1h-6.4zM235.4 645h6.4v1h-6.4zM235.4 657h6.4v1h-6.4zM235.4 660h6.4v1h-6.4zM292.0 582h6.4v1h-6.4zM292.0 585h6.4v1h-6.4zM292.0 597h6.4v1h-6.4zM292.0 600h6.4v1h-6.4zM292.0 612h6.4v1h-6.4zM292.0 615h6.4v1h-6.4zM292.0 642h6.4v1h-6.4zM292.0 645h6.4v1h-6.4zM292.0 657h6.4v1h-6.4zM292.0 660h6.4v1h-6.4zM348.7 582h6.4v1h-6.4zM348.7 585h6.4v1h-6.4zM348.7 597h6.4v1h-6.4zM348.7 600h6.4v1h-6.4zM348.7 612h6.4v1h-6.4zM348.7 615h6.4v1h-6.4zM348.7 642h6.4v1h-6.4zM348.7 645h6.4v1h-6.4zM348.7 657h6.4v1h-6.4zM348.7 660h6.4v1h-6.4zM405.3 582h6.4v1h-6.4zM405.3 585h6.4v1h-6.4zM405.3 597h6.4v1h-6.4zM405.3 600h6.4v1h-6.4zM405.3 612h6.4v1h-6.4zM405.3 615h6.4v1h-6.4zM405.3 642h6.4v1h-6.4zM405.3 645h6.4v1h-6.4zM405.3 657h6.4v1h-6.4zM405.3 660h6.4v1h-6.4zM461.9 582h6.4v1h-6.4zM461.9 585h6.4v1h-6.4zM461.9 597h6.4v1h-6.4zM461.9 600h6.4v1h-6.4zM461.9 612h6.4v1h-6.4zM461.9 615h6.4v1h-6.4zM461.9 642h6.4v1h-6.4zM461.9 645h6.4v1h-6.4zM461.9 657h6.4v1h-6.4zM461.9 660h6.4v1h-6.4zM518.5 582h6.4v1h-6.4zM518.5 585h6.4v1h-6.4zM518.5 597h6.4v1h-6.4zM518.5 600h6.4v1h-6.4zM518.5 612h6.4v1h-6.4zM518.5 615h6.4v1h-6.4zM518.5 642h6.4v1h-6.4zM518.5 645h6.4v1h-6.4zM518.5 657h6.4v1h-6.4zM518.5 660h6.4v1h-6.4zM575.1 582h6.4v1h-6.4zM575.1 585h6.4v1h-6.4zM575.1 597h6.4v1h-6.4zM575.1 600h6.4v1h-6.4zM575.1 612h6.4v1h-6.4zM575.1 615h6.4v1h-6.4zM575.1 642h6.4v1h-6.4zM575.1 645h6.4v1h-6.4zM575.1 657h6.4v1h-6.4zM575.1 660h6.4v1h-6.4zM631.8 582h6.4v1h-6.4zM631.8 585h6.4v1h-6.4zM631.8 597h6.4v1h-6.4zM631.8 600h6.4v1h-6.4zM631.8 612h6.4v1h-6.4zM631.8 615h6.4v1h-6.4zM631.8 642h6.4v1h-6.4zM631.8 645h6.4v1h-6.4zM631.8 657h6.4v1h-6.4zM631.8 660h6.4v1h-6.4zM688.4 582h6.4v1h-6.4zM688.4 585h6.4v1h-6.4zM688.4 597h6.4v1h-6.4zM688.4 600h6.4v1h-6.4zM688.4 612h6.4v1h-6.4zM688.4 615h6.4v1h-6.4zM688.4 642h6.4v1h-6.4zM688.4 645h6.4v1h-6.4zM688.4 657h6.4v1h-6.4zM688.4 660h6.4v1h-6.4zM745.0 582h6.4v1h-6.4zM745.0 585h6.4v1h-6.4zM745.0 597h6.4v1h-6.4zM745.0 600h6.4v1h-6.4zM745.0 612h6.4v1h-6.4zM745.0 615h6.4v1h-6.4zM745.0 642h6.4v1h-6.4zM745.0 645h6.4v1h-6.4zM745.0 657h6.4v1h-6.4zM745.0 660h6.4v1h-6.4zM801.6 582h6.4v1h-6.4zM801.6 585h6.4v1h-6.4zM801.6 597h6.4v1h-6.4zM801.6 600h6.4v1h-6.4zM801.6 612h6.4v1h-6.4zM801.6 615h6.4v1h-6.4zM801.6 642h6.4v1h-6.4zM801.6 645h6.4v1h-6.4zM801.6 657h6.4v1h-6.4zM801.6 660h6.4v1h-6.4zM858.2 582h6.4v1h-6.4zM858.2 585h6.4v1h-6.4zM858.2 597h6.4v1h-6.4zM858.2 600h6.4v1h-6.4zM858.2 612h6.4v1h-6.4zM858.2 615h6.4v1h-6.4zM858.2 642h6.4v1h-6.4zM858.2 645h6.4v1h-6.4zM858.2 657h6.4v1h-6.4zM858.2 660h6.4v1h-6.4zM915.7 582h6.4v1h-6.4zM915.7 585h6.4v1h-6.4zM915.7 597h6.4v1h-6.4zM915.7 600h6.4v1h-6.4zM915.7 612h6.4v1h-6.4zM915.7 615h6.4v1h-6.4zM915.7 642h6.4v1h-6.4zM915.7 645h6.4v1h-6.4zM915.7 657h6.4v1h-6.4zM915.7 660h6.4v1h-6.4z" fill="#8585b5"/>
<g><text transform="translate(0 678) scale(1 1.118)" x="441 503 580 621" y="0">RERM</text><text transform="translate(0 678) scale(1 1.02)" x="450 457 464 471 485 492 515 522 533 540 551 569 589 596 603 610 632 639 653 660" y="0">epeangemensyepeaaser</text><text transform="translate(0 678) scale(1 1.05)" x="478 482 512 547 562 617 646" y="0">tiltbtk</text></g>
<g><text transform="translate(0 692) scale(1 1.118)" x="68 109" y="0">RM</text><text transform="translate(0 692) scale(1 1.02)" x="77 84 91 98 120 127 141 148" y="0">epeaaser</text><text transform="translate(0 692) scale(1 1.05)" x="105 134" y="0">tk</text></g>
<rect x="156" y="680" width="793" height="15" fill="#000" shape-rendering="crispEdges"/>
</svg></body></html>
